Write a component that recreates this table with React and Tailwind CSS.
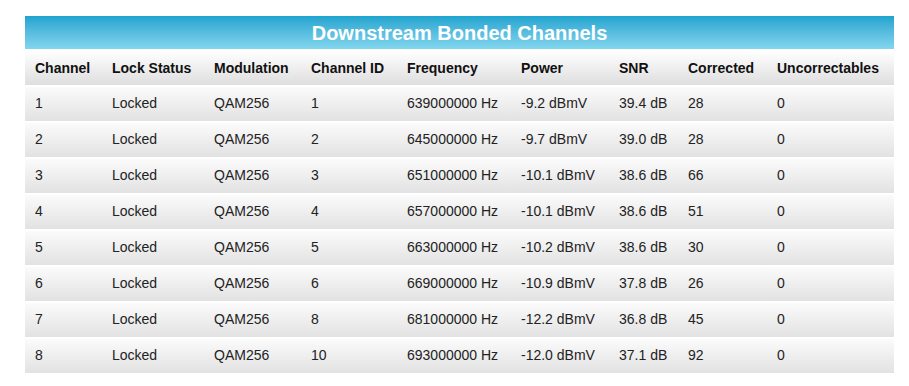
import React from 'react';

const columns = [
  { label: 'Channel', w: 'w-[77px]' },
  { label: 'Lock Status', w: 'w-[102px]' },
  { label: 'Modulation', w: 'w-[97px]' },
  { label: 'Channel ID', w: 'w-[96px]' },
  { label: 'Frequency', w: 'w-[114px]' },
  { label: 'Power', w: 'w-[98px]' },
  { label: 'SNR', w: 'w-[69px]' },
  { label: 'Corrected', w: 'w-[89px]' },
  { label: 'Uncorrectables', w: 'w-[127px]' },
];

const rows = [
  ['1', 'Locked', 'QAM256', '1', '639000000 Hz', '-9.2 dBmV', '39.4 dB', '28', '0'],
  ['2', 'Locked', 'QAM256', '2', '645000000 Hz', '-9.7 dBmV', '39.0 dB', '28', '0'],
  ['3', 'Locked', 'QAM256', '3', '651000000 Hz', '-10.1 dBmV', '38.6 dB', '66', '0'],
  ['4', 'Locked', 'QAM256', '4', '657000000 Hz', '-10.1 dBmV', '38.6 dB', '51', '0'],
  ['5', 'Locked', 'QAM256', '5', '663000000 Hz', '-10.2 dBmV', '38.6 dB', '30', '0'],
  ['6', 'Locked', 'QAM256', '6', '669000000 Hz', '-10.9 dBmV', '37.8 dB', '26', '0'],
  ['7', 'Locked', 'QAM256', '8', '681000000 Hz', '-12.2 dBmV', '36.8 dB', '45', '0'],
  ['8', 'Locked', 'QAM256', '10', '693000000 Hz', '-12.0 dBmV', '37.1 dB', '92', '0'],
];

export default function App() {
  return (
    <div className="min-h-screen bg-white pt-[14px] pl-[25px] font-['Liberation_Sans',Arial,sans-serif]">
      <table className="w-[869px] table-fixed border-separate border-spacing-x-0 border-spacing-y-[2px]">
        <colgroup>
          {columns.map((c) => (
            <col key={c.label} className={c.w} />
          ))}
        </colgroup>
        <thead>
          <tr>
            <th
              colSpan={9}
              className="h-[33px] p-0 text-center text-[20px] font-bold text-white bg-gradient-to-b from-[#1ba4cf] to-[#82d6ee]"
            >
              Downstream Bonded Channels
            </th>
          </tr>
          <tr>
            {columns.map((c) => (
              <th
                key={c.label}
                className="h-[34px] pl-[10px] pr-0 text-left text-[14px] font-bold text-[#111] whitespace-nowrap bg-gradient-to-b from-white to-[#dedede]"
              >
                {c.label}
              </th>
            ))}
          </tr>
        </thead>
        <tbody>
          {rows.map((r, i) => (
            <tr key={i}>
              {r.map((cell, j) => (
                <td
                  key={j}
                  className="h-[34px] pl-[10px] pr-0 pb-[1px] text-left text-[14px] text-[#222] whitespace-nowrap bg-gradient-to-b from-[#fbfbfb] to-[#e2e2e2]"
                >
                  {cell}
                </td>
              ))}
            </tr>
          ))}
        </tbody>
      </table>
    </div>
  );
}
